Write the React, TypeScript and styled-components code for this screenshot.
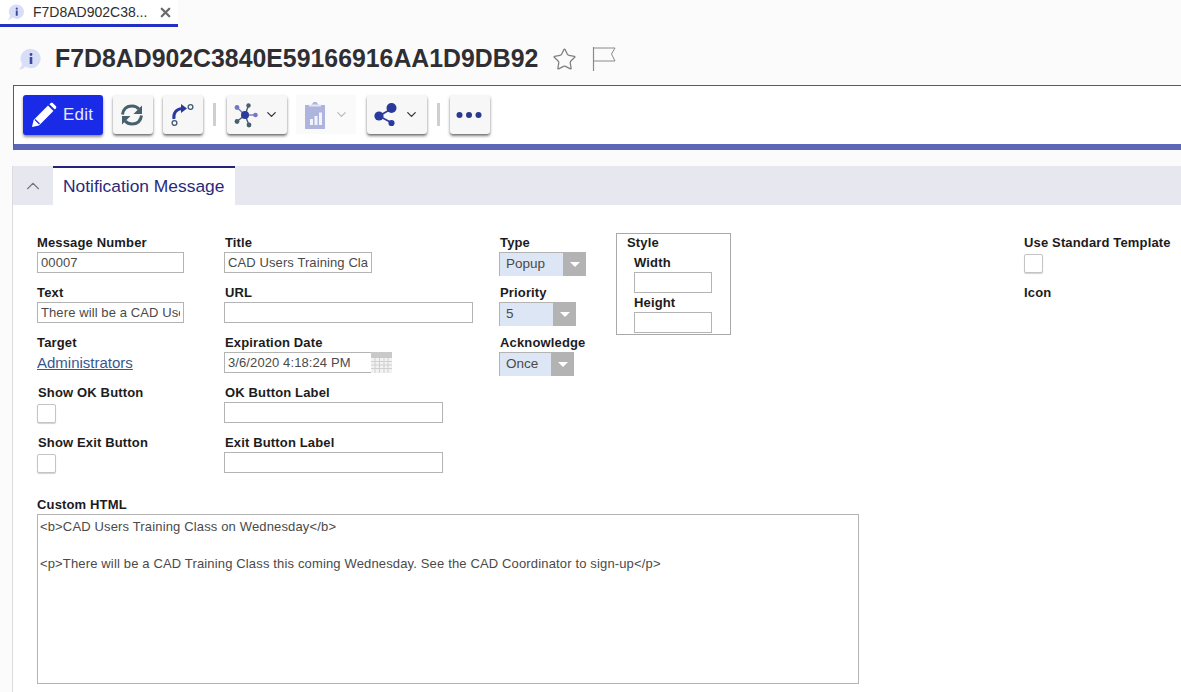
import React from 'react';
import styled, { createGlobalStyle } from 'styled-components';
import { ChevronDown, ChevronUp, Star, X } from 'lucide-react';

const GlobalStyle = createGlobalStyle`
  html, body {
    margin: 0;
    padding: 0;
    background: #fbfbfb;
    font-family: 'Liberation Sans', sans-serif;
  }
`;

const Page = styled.div`
  width: 1181px;
  height: 692px;
  overflow: hidden;
`;

const TabStrip = styled.div`
  height: 27px;
  display: flex;
`;

const DocTab = styled.div`
  width: 178px;
  height: 27px;
  box-sizing: border-box;
  background: #fff;
  border-bottom: 3px solid #2330c4;
  display: flex;
  align-items: center;
  padding-left: 7px;
  color: #2e2e2e;
  font-size: 14px;
  svg.close {
    margin-left: 11px;
    color: #6b6b6b;
  }
`;

const DocTabLabel = styled.span`
  margin-left: 8px;
`;

const TitleRow = styled.div`
  height: 58px;
  display: flex;
  align-items: center;
  padding: 6px 0 0 18px;
  box-sizing: border-box;
`;

const Heading = styled.h1`
  margin: 0 0 0 13px;
  font-size: 24.85px;
  font-weight: 700;
  color: #2f2f33;
`;

const StarWrap = styled.span`
  display: flex;
  margin-left: 14px;
  color: #7f7f7f;
`;

const FlagWrap = styled.span`
  display: flex;
  margin-left: 15px;
`;

const Toolbar = styled.div`
  margin-left: 13px;
  height: 65px;
  border-top: 1px solid #5c5c5c;
  border-left: 1px solid #5c5c5c;
  border-bottom: 6px solid #5c67b5;
  background: #fff;
  display: flex;
  align-items: flex-start;
  padding: 9px 0 0 9px;
  box-sizing: border-box;
`;

const EditButton = styled.button`
  width: 80px;
  height: 40px;
  border: none;
  border-radius: 3px;
  background: #1a2be8;
  color: #e6e8fb;
  font: 400 17px 'Liberation Sans', sans-serif;
  letter-spacing: 0.2px;
  display: flex;
  align-items: center;
  padding: 0 0 0 8px;
  gap: 6px;
  box-shadow: 0 2px 3px rgba(0, 0, 0, 0.45);
`;

const ToolButton = styled.button<{ $w: number; $ml: number }>`
  width: ${(p) => p.$w}px;
  height: 39px;
  margin-left: ${(p) => p.$ml}px;
  border: none;
  border-radius: 3px;
  background: #f7f7f7;
  display: flex;
  align-items: center;
  justify-content: center;
  gap: 5px;
  padding: 0 2px 0 0;
  box-shadow: 0 1px 1px rgba(0, 0, 0, 0.1), 0 2px 3px rgba(0, 0, 0, 0.5);
`;

const GhostButton = styled.div`
  width: 60px;
  height: 39px;
  margin-left: 9px;
  background: #fafafa;
  display: flex;
  align-items: center;
  justify-content: center;
  gap: 8px;
`;

const Divider = styled.div<{ $ml: number }>`
  width: 3px;
  height: 23px;
  margin: 8px 0 0 ${(p) => p.$ml}px;
  background: #cfcfcf;
`;

const Section = styled.section`
  margin: 16px 0 0 12px;
  border-left: 1px solid #dcdcdc;
  height: 540px;
  background: #fff;
`;

const SectionHead = styled.div`
  height: 39px;
  background: #e7e8ef;
  display: flex;
`;

const Collapse = styled.div`
  width: 40px;
  display: flex;
  align-items: center;
  justify-content: center;
  color: #777;
`;

const SectionTab = styled.div`
  width: 182px;
  background: #fff;
  border-top: 2px solid #23237a;
  box-sizing: border-box;
  padding: 0 0 0 10px;
  display: flex;
  align-items: center;
  color: #2a2a7c;
  font-size: 17.4px;
`;

const Form = styled.div`
  display: grid;
  grid-template-columns: 187px 275px 117px 408px 1fr;
  grid-auto-rows: 50px;
  padding: 30px 0 0 24px;
`;

const Field = styled.div<{ $col: number; $row: number }>`
  grid-column: ${(p) => p.$col};
  grid-row: ${(p) => p.$row};
  display: flex;
  flex-direction: column;
  align-items: flex-start;
`;

const Label = styled.label<{ $indent?: boolean }>`
  display: block;
  margin-left: ${(p) => (p.$indent ? 1 : 0)}px;
  font: 700 13px/16px 'Liberation Sans', sans-serif;
  color: #1c1c1c;
  height: 16px;
  white-space: nowrap;
  letter-spacing: 0.15px;
`;

const TextBox = styled.input<{ $w: number }>`
  display: block;
  width: ${(p) => p.$w}px;
  height: 21px;
  margin: 1px 0 0;
  box-sizing: border-box;
  border: 1px solid #b4b4b4;
  border-radius: 0;
  outline: none;
  background: #fff;
  padding: 0 3px;
  font: 400 13px 'Liberation Sans', sans-serif;
  letter-spacing: 0.1px;
  color: #4a4a4a;
`;

const DateRow = styled.div`
  display: flex;
  align-items: flex-start;
  svg {
    margin-left: -1px;
    margin-top: 1px;
  }
`;

const LinkText = styled.a`
  margin-top: 3px;
  font: 400 15px/18px 'Liberation Sans', sans-serif;
  color: #35598f;
  text-decoration: underline;
`;

const Combo = styled.div<{ $w: number }>`
  width: ${(p) => p.$w}px;
  height: 24px;
  margin-top: 1px;
  box-sizing: border-box;
  padding: 1px 0 0 1px;
  display: flex;
  background: #b3b3b3;
`;

const ComboValue = styled.div`
  flex: 1;
  background: #dce6f5;
  padding-left: 6px;
  font: 400 13.5px/21px 'Liberation Sans', sans-serif;
  color: #4a4a4a;
`;

const ComboArrow = styled.div`
  width: 23px;
  display: flex;
  align-items: center;
  justify-content: center;
  &::after {
    content: '';
    border-left: 5px solid transparent;
    border-right: 5px solid transparent;
    border-top: 5px solid #fff;
  }
`;

const Check = styled.div`
  width: 17px;
  height: 17px;
  margin-top: 3px;
  border: 1px solid #c4c4c4;
  border-radius: 2px;
  background: #fff;
  box-shadow: 0 1px 1px rgba(0, 0, 0, 0.18);
`;

const StyleBox = styled.div`
  grid-column: 4;
  grid-row: 1 / span 3;
  width: 115px;
  height: 102px;
  margin-top: -2px;
  box-sizing: border-box;
  border: 1px solid #a9a9a9;
  background: #fff;
  padding: 1px 0 0 9px;
  overflow: hidden;
`;

const StyleFields = styled.div`
  margin: 4px 0 0 8px;
  display: flex;
  flex-direction: column;
`;

const StyleGap = styled.div`
  height: 2px;
`;

const HtmlField = styled.div`
  padding: 12px 0 0 24px;
`;

const HtmlArea = styled.textarea`
  display: block;
  width: 822px;
  height: 170px;
  margin: 1px 0 0;
  box-sizing: border-box;
  border: 1px solid #b4b4b4;
  border-radius: 0;
  outline: none;
  resize: none;
  overflow: hidden;
  background: #fff;
  padding: 3px 2px;
  font: 400 13px/18.5px 'Liberation Sans', sans-serif;
  letter-spacing: 0.15px;
  color: #4a4a4a;
`;

const InfoIcon = ({ size }: { size: number }) => (
  <svg width={size} height={size} viewBox="0 0 24 24">
    <path d="M13 2a9.6 9.6 0 1 1-5.6 17.4C6 21 3.6 22.4 1 22.6c1.6-1.6 2.8-3.6 3.2-5.6A9.6 9.6 0 0 1 13 2z" fill="#d9def8" />
    <circle cx="13" cy="7.5" r="1.4" fill="#3b4a9c" />
    <rect x="11.7" y="10" width="2.6" height="7" fill="#3b4a9c" />
  </svg>
);

const PencilIcon = () => (
  <svg width="26" height="26" viewBox="0 0 26 26">
    <path d="M1 25l1.6-7L17 3.6l5.4 5.4L8 23.4z M18.4 2.2l1.4-1.2c.6-.5 1.3-.5 1.9 0l3.3 3.3c.5.6.5 1.3 0 1.9l-1.2 1.4z" fill="#fff" />
    <path d="M4 17.5l4.5 4.5" stroke="#1a2be8" strokeWidth="1.2" />
  </svg>
);

const RefreshIcon = () => (
  <svg width="26" height="26" viewBox="0 0 26 26" fill="none">
    <path d="M3.500 12.500C4.300 7 8 4 13 4c3 0 5.300 1.100 6.800 3" stroke="#46606e" strokeWidth="3" />
    <path d="M23 3.500v8.500h-8.500z" fill="#46606e" />
    <path d="M22.500 13.500C21.700 19 18 22 13 22c-3 0-5.300-1.100-6.800-3" stroke="#46606e" strokeWidth="3" />
    <path d="M3 22.500V14h8.500z" fill="#46606e" />
  </svg>
);

const RouteIcon = () => (
  <svg width="26" height="28" viewBox="0 0 26 28" fill="none">
    <circle cx="21.5" cy="6" r="2.4" stroke="#3d5a72" strokeWidth="1.3" />
    <circle cx="5.5" cy="22" r="2.4" stroke="#3d5a72" strokeWidth="1.3" />
    <path d="M5 18c-1-6 2.500-10 8-10.500" stroke="#2a3a9c" strokeWidth="3" />
    <path d="M12 3l6 4.500-6 4.500z" fill="#2a3a9c" />
  </svg>
);

const NetworkIcon = () => (
  <svg width="26" height="26" viewBox="0 0 26 26">
    <g strokeWidth="1.4">
      <path d="M12 13L4 5.500" stroke="#7278c4" />
      <path d="M12 13L15.500 3.500" stroke="#46606e" />
      <path d="M12 13L23 13" stroke="#7278c4" />
      <path d="M12 13L16 23" stroke="#46606e" />
      <path d="M12 13L4 19.500" stroke="#46606e" />
    </g>
    <circle cx="12" cy="13" r="4" fill="#2a3a9c" />
    <circle cx="4" cy="5.500" r="2.400" fill="#7278c4" />
    <circle cx="15.500" cy="3.500" r="2.200" fill="#46606e" />
    <circle cx="22.500" cy="13" r="2.300" fill="#7278c4" />
    <circle cx="16" cy="23" r="2.400" fill="#46606e" />
    <circle cx="4" cy="19.500" r="2.400" fill="#46606e" />
  </svg>
);

const ClipboardIcon = () => (
  <svg width="22" height="28" viewBox="0 0 22 28">
    <path d="M1 4h6.500l2-3h3l2 3H21v24H1z" fill="#adb4dd" />
    <rect x="5" y="3.500" width="12" height="2" fill="#e4e6f3" />
    <rect x="6" y="18" width="3" height="6" fill="#f3f4fa" />
    <rect x="10.500" y="15" width="3" height="9" fill="#f3f4fa" />
    <rect x="15" y="11.500" width="3" height="12.500" fill="#f3f4fa" />
  </svg>
);

const ShareIcon = () => (
  <svg width="26" height="26" viewBox="0 0 26 26">
    <path d="M6 14L19 6.500M6 14l14 7.500" stroke="#2a3a9c" strokeWidth="1.600" fill="none" />
    <circle cx="6" cy="14" r="4.600" fill="#2a3a9c" />
    <circle cx="18.500" cy="6" r="5" fill="#2a3a9c" />
    <circle cx="18.500" cy="21" r="3.100" fill="#2a3a9c" />
  </svg>
);

const DotsIcon = () => (
  <svg width="26" height="8" viewBox="0 0 26 8">
    <circle cx="3.500" cy="4" r="3" fill="#2a3a8c" />
    <circle cx="13" cy="4" r="3" fill="#2a3a8c" />
    <circle cx="22.500" cy="4" r="3" fill="#2a3a8c" />
  </svg>
);

const FlagIcon = () => (
  <svg width="24" height="24" viewBox="0 0 24 24" fill="none" stroke="#8a8a8a" strokeWidth="1">
    <path d="M1.500 0v24" strokeWidth="1.200" />
    <path d="M2 1h21l-3.500 6 3.500 7H2" />
  </svg>
);

const CalendarIcon = () => (
  <svg width="21" height="21" viewBox="0 0 21 21">
    <rect width="21" height="6" fill="#c9c9c9" />
    <rect y="6" width="21" height="15" fill="#f2f2f2" />
    <path d="M0 9.500h21M0 13h21M0 16.500h21M4 6v15M8.500 6v15M13 6v15M17 6v15" stroke="#d0d0d0" strokeWidth="1" />
  </svg>
);

const htmlValue =
  '<b>CAD Users Training Class on Wednesday</b>\n\n<p>There will be a CAD Training Class this coming Wednesday. See the CAD Coordinator to sign-up</p>';

const App = () => (
  <Page>
    <GlobalStyle />
    <TabStrip>
      <DocTab>
        <InfoIcon size={18} />
        <DocTabLabel>F7D8AD902C38...</DocTabLabel>
        <X className="close" size={15} strokeWidth={3.6} />
      </DocTab>
    </TabStrip>
    <TitleRow>
      <InfoIcon size={24} />
      <Heading>F7D8AD902C3840E59166916AA1D9DB92</Heading>
      <StarWrap>
        <Star size={25} strokeWidth={1.2} />
      </StarWrap>
      <FlagWrap>
        <FlagIcon />
      </FlagWrap>
    </TitleRow>
    <Toolbar>
      <EditButton>
        <PencilIcon />
        Edit
      </EditButton>
      <ToolButton $w={40} $ml={10}>
        <RefreshIcon />
      </ToolButton>
      <ToolButton $w={40} $ml={10}>
        <RouteIcon />
      </ToolButton>
      <Divider $ml={10} />
      <ToolButton $w={60} $ml={11}>
        <NetworkIcon />
        <ChevronDown size={15} color="#333" />
      </ToolButton>
      <GhostButton>
        <ClipboardIcon />
        <ChevronDown size={15} color="#bbb" />
      </GhostButton>
      <ToolButton $w={60} $ml={11}>
        <ShareIcon />
        <ChevronDown size={15} color="#333" />
      </ToolButton>
      <Divider $ml={10} />
      <ToolButton $w={40} $ml={10}>
        <DotsIcon />
      </ToolButton>
    </Toolbar>
    <Section>
      <SectionHead>
        <Collapse>
          <ChevronUp size={22} strokeWidth={1.2} />
        </Collapse>
        <SectionTab>Notification Message</SectionTab>
      </SectionHead>
      <Form>
        <Field $col={1} $row={1}>
          <Label>Message Number</Label>
          <TextBox $w={147} readOnly value="00007" />
        </Field>
        <Field $col={2} $row={1}>
          <Label $indent>Title</Label>
          <TextBox $w={148} readOnly value="CAD Users Training Class on Wednesday" />
        </Field>
        <Field $col={3} $row={1}>
          <Label $indent>Type</Label>
          <Combo $w={87}>
            <ComboValue>Popup</ComboValue>
            <ComboArrow />
          </Combo>
        </Field>
        <StyleBox>
          <Label $indent>Style</Label>
          <StyleFields>
            <Label>Width</Label>
            <TextBox $w={78} readOnly />
            <StyleGap />
            <Label>Height</Label>
            <TextBox $w={78} readOnly />
          </StyleFields>
        </StyleBox>
        <Field $col={5} $row={1}>
          <Label>Use Standard Template</Label>
          <Check />
        </Field>
        <Field $col={1} $row={2}>
          <Label>Text</Label>
          <TextBox $w={147} readOnly value="There will be a CAD Users Training Class" />
        </Field>
        <Field $col={2} $row={2}>
          <Label $indent>URL</Label>
          <TextBox $w={249} readOnly />
        </Field>
        <Field $col={3} $row={2}>
          <Label $indent>Priority</Label>
          <Combo $w={77}>
            <ComboValue>5</ComboValue>
            <ComboArrow />
          </Combo>
        </Field>
        <Field $col={5} $row={2}>
          <Label>Icon</Label>
        </Field>
        <Field $col={1} $row={3}>
          <Label>Target</Label>
          <LinkText>Administrators</LinkText>
        </Field>
        <Field $col={2} $row={3}>
          <Label $indent>Expiration Date</Label>
          <DateRow>
            <TextBox $w={148} readOnly value="3/6/2020 4:18:24 PM" />
            <CalendarIcon />
          </DateRow>
        </Field>
        <Field $col={3} $row={3}>
          <Label $indent>Acknowledge</Label>
          <Combo $w={75}>
            <ComboValue>Once</ComboValue>
            <ComboArrow />
          </Combo>
        </Field>
        <Field $col={1} $row={4}>
          <Label $indent>Show OK Button</Label>
          <Check />
        </Field>
        <Field $col={2} $row={4}>
          <Label $indent>OK Button Label</Label>
          <TextBox $w={219} readOnly />
        </Field>
        <Field $col={1} $row={5}>
          <Label $indent>Show Exit Button</Label>
          <Check />
        </Field>
        <Field $col={2} $row={5}>
          <Label $indent>Exit Button Label</Label>
          <TextBox $w={219} readOnly />
        </Field>
      </Form>
      <HtmlField>
        <Label>Custom HTML</Label>
        <HtmlArea readOnly value={htmlValue} />
      </HtmlField>
    </Section>
  </Page>
);

export default App;
